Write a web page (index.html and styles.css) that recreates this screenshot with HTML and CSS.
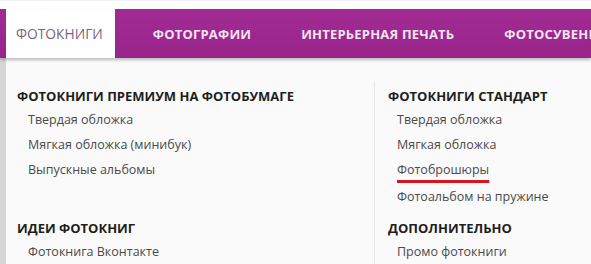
FILE: index.html
```html
<!DOCTYPE html>
<html lang="ru">
<head>
    <meta charset="UTF-8">
    <title>Меню фотокниг</title>
    <link rel="stylesheet" href="styles.css">
</head>
<body>
    <div class="menu">
        <div class="nav">
            <div class="tab active">ФОТОКНИГИ</div>
            <div class="tab">ФОТОГРАФИИ</div>
            <div class="tab">ИНТЕРЬЕРНАЯ ПЕЧАТЬ</div>
            <div class="tab">ФОТОСУВЕНИРЫ</div>
        </div>
        <div class="dropdown">
            <div class="column">
                <div class="group">
                    <div class="group-title">ФОТОКНИГИ ПРЕМИУМ НА ФОТОБУМАГЕ</div>
                    <div class="item">Твердая обложка</div>
                    <div class="item">Мягкая обложка (минибук)</div>
                    <div class="item">Выпускные альбомы</div>
                </div>
                <div class="group">
                    <div class="group-title">ИДЕИ ФОТОКНИГ</div>
                    <div class="item">Фотокнига Вконтакте</div>
                </div>
            </div>
            <div class="column divided">
                <div class="group">
                    <div class="group-title">ФОТОКНИГИ СТАНДАРТ</div>
                    <div class="item">Твердая обложка</div>
                    <div class="item">Мягкая обложка</div>
                    <div class="item"><span class="marked">Фотоброшюры</span></div>
                    <div class="item">Фотоальбом на пружине</div>
                </div>
                <div class="group">
                    <div class="group-title">ДОПОЛНИТЕЛЬНО</div>
                    <div class="item">Промо фотокниги</div>
                </div>
            </div>
        </div>
    </div>
</body>
</html>
```

FILE: styles.css
```css
body {
    margin: 0;
    background-color: #ffffff;
    font-family: 'Open Sans', 'Noto Sans', sans-serif;
    overflow: hidden;
}

.menu {
    padding-top: 8px;
    border-top: 1px solid #f0f0f0;
}

.nav {
    display: flex;
    align-items: stretch;
    height: 49px;
    padding-left: 6px;
    background: linear-gradient(#a12b93, #98258b);
    box-shadow: 0 2px 3px rgba(0, 0, 0, 0.25);
    position: relative;
    z-index: 1;
    white-space: nowrap;
}

.tab {
    display: flex;
    align-items: center;
    padding: 0 25px;
    font-size: 13px;
    letter-spacing: 0.2px;
    font-weight: bold;
    color: #f4e4f2;
}

.tab.active {
    padding: 0 12px 0 10px;
    margin-right: 13px;
    background-color: #ffffff;
    color: #7c5f80;
    font-size: 13.8px;
    letter-spacing: 0;
    font-weight: normal;
}

.dropdown {
    display: flex;
    background-color: #fafafa;
    border-left: 6px solid #d6d6d6;
}

.column {
    display: flex;
    flex-direction: column;
    gap: 9px;
    padding-top: 27px;
}

.column:first-child {
    width: 357px;
    padding-left: 11px;
}

.column.divided {
    margin-top: 23px;
    padding-top: 4px;
    padding-left: 13px;
    border-left: 1px solid #e8e8e8;
}

.group:first-child {
    height: 123px;
    flex-shrink: 0;
}

.group-title {
    font-size: 13px;
    font-weight: bold;
    color: #1e1e1e;
    line-height: 22px;
}

.item {
    padding-left: 11px;
    font-size: 12.5px;
    color: #4a4a4a;
    line-height: 25px;
}

.divided .item {
    padding-left: 9px;
}

.divided .item:nth-child(5) {
    margin-top: 2px;
}

.marked {
    text-decoration: underline 3px #d9141c;
    text-underline-offset: 6px;
}
```
